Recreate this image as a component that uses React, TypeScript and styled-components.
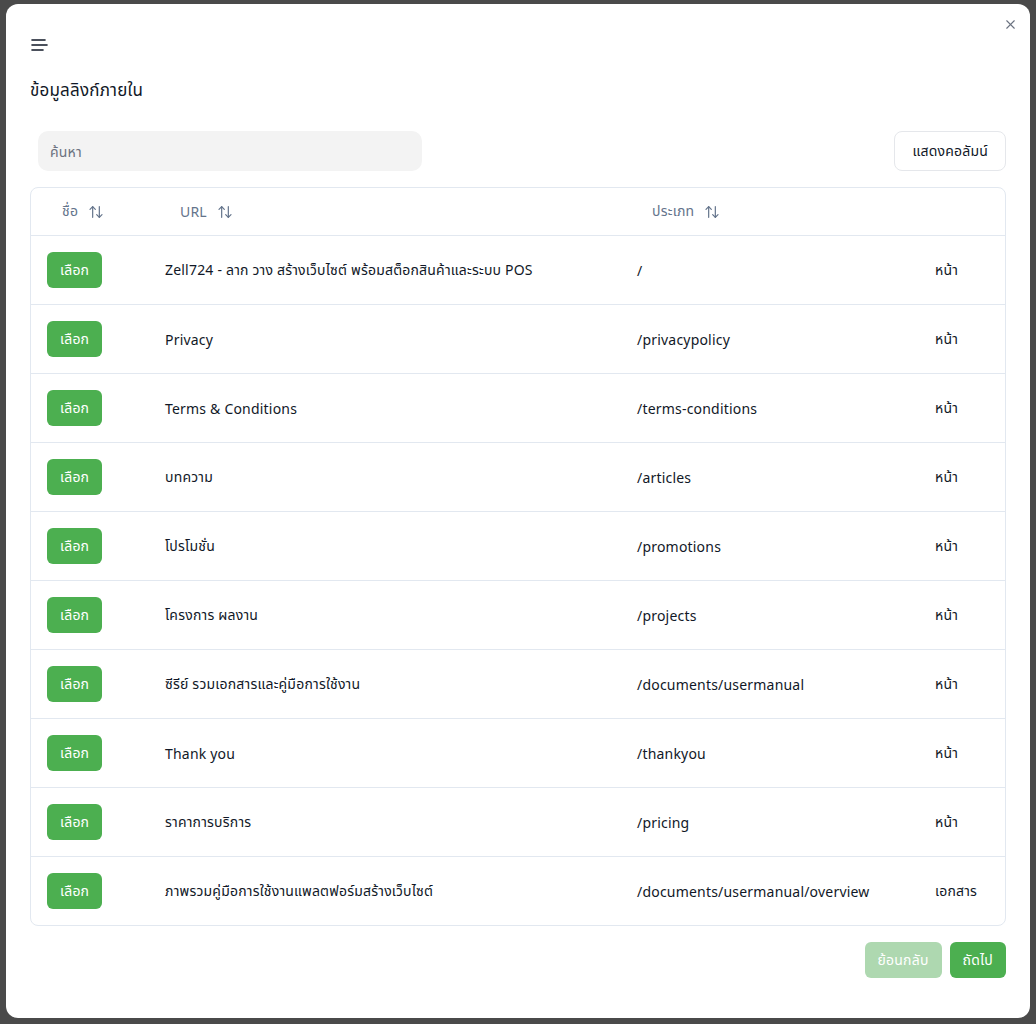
import React from 'react'
import styled, { createGlobalStyle } from 'styled-components'
import { ArrowUpDown, X } from 'lucide-react'

const GlobalStyle = createGlobalStyle`
  * { box-sizing: border-box; }
  html, body {
    margin: 0;
    background: #4a4a4a;
    font-family: "Noto Sans", "Noto Sans Thai", "Open Sans", sans-serif;
    color: #111827;
  }
`

type Link = { name: string; url: string; type: string }

const links: Link[] = [
  { name: 'Zell724 - ลาก วาง สร้างเว็บไซต์ พร้อมสต็อกสินค้าและระบบ POS', url: '/', type: 'หน้า' },
  { name: 'Privacy', url: '/privacypolicy', type: 'หน้า' },
  { name: 'Terms & Conditions', url: '/terms-conditions', type: 'หน้า' },
  { name: 'บทความ', url: '/articles', type: 'หน้า' },
  { name: 'โปรโมชั่น', url: '/promotions', type: 'หน้า' },
  { name: 'โครงการ ผลงาน', url: '/projects', type: 'หน้า' },
  { name: 'ซีรีย์ รวมเอกสารและคู่มือการใช้งาน', url: '/documents/usermanual', type: 'หน้า' },
  { name: 'Thank you', url: '/thankyou', type: 'หน้า' },
  { name: 'ราคาการบริการ', url: '/pricing', type: 'หน้า' },
  { name: 'ภาพรวมคู่มือการใช้งานแพลตฟอร์มสร้างเว็บไซต์', url: '/documents/usermanual/overview', type: 'เอกสาร' },
]

const MenuIcon = () => (
  <svg width="18" height="14" viewBox="0 0 18 14" fill="none" stroke="#111827" strokeWidth="1.6" strokeLinecap="round">
    <path d="M1 2h13" />
    <path d="M1 7h15" />
    <path d="M1 12h11" />
  </svg>
)

const App = () => {
  return (
    <>
      <GlobalStyle />
      <Overlay>
        <Modal>
          <CloseButton aria-label="close">
            <X size={15} strokeWidth={1.8} />
          </CloseButton>
          <MenuButton>
            <MenuIcon />
          </MenuButton>
          <Title>ข้อมูลลิงก์ภายใน</Title>

          <Toolbar>
            <SearchInput placeholder="ค้นหา" />
            <OutlineButton>แสดงคอลัมน์</OutlineButton>
          </Toolbar>

          <Table>
            <HeadRow>
              <HeadCell>
                ชื่อ <ArrowUpDown size={16} strokeWidth={1.8} />
              </HeadCell>
              <HeadCell>
                URL <ArrowUpDown size={16} strokeWidth={1.8} />
              </HeadCell>
              <HeadCell>
                ประเภท <ArrowUpDown size={16} strokeWidth={1.8} />
              </HeadCell>
              <HeadCell />
            </HeadRow>
            {links.map((l) => (
              <Row key={l.url}>
                <Cell>
                  <GreenButton>เลือก</GreenButton>
                </Cell>
                <Cell>{l.name}</Cell>
                <Cell>{l.url}</Cell>
                <Cell>{l.type}</Cell>
              </Row>
            ))}
          </Table>

          <Footer>
            <GreenButton disabled>ย้อนกลับ</GreenButton>
            <GreenButton>ถัดไป</GreenButton>
          </Footer>
        </Modal>
      </Overlay>
    </>
  )
}

export default App

const Overlay = styled.div`
  padding: 4px 6px;
  min-height: 1024px;
`

const Modal = styled.div`
  position: relative;
  width: 1024px;
  height: 1014px;
  background: #ffffff;
  border-radius: 12px;
  padding: 32px 24px 40px;
  display: flex;
  flex-direction: column;
  letter-spacing: 0.2px;
`

const CloseButton = styled.button`
  position: absolute;
  top: 9px;
  right: 9px;
  width: 22px;
  height: 22px;
  display: flex;
  align-items: center;
  justify-content: center;
  border: none;
  background: transparent;
  color: #6b7280;
  padding: 0;
  cursor: pointer;
`

const MenuButton = styled.div`
  width: 20px;
  height: 18px;
  display: flex;
  align-items: center;
  padding-left: 1px;
`

const Title = styled.h2`
  margin: 24px 0 0;
  font-size: 17px;
  font-weight: 400;
  line-height: 24px;
`

const Toolbar = styled.div`
  display: flex;
  justify-content: space-between;
  align-items: center;
  margin-top: 29px;
  padding-left: 8px;
`

const SearchInput = styled.input`
  width: 384px;
  height: 40px;
  border: none;
  outline: none;
  border-radius: 10px;
  background: #f3f3f3;
  padding: 0 12px;
  font-family: inherit;
  font-size: 14px;
  letter-spacing: inherit;
  color: #111827;
  &::placeholder {
    color: #6b7280;
  }
`

const OutlineButton = styled.button`
  height: 40px;
  padding: 0 17px;
  border: 1px solid #e5e7eb;
  border-radius: 8px;
  background: #ffffff;
  font-family: inherit;
  font-size: 14px;
  letter-spacing: inherit;
  color: #111827;
  cursor: pointer;
`

const Table = styled.div`
  margin-top: 16px;
  border: 1px solid #e2e8f0;
  border-radius: 8px;
  overflow: hidden;
`

const HeadRow = styled.div`
  display: grid;
  grid-template-columns: 118px 472px 298px 1fr;
  height: 47px;
  align-items: center;
`

const HeadCell = styled.div`
  display: flex;
  align-items: center;
  gap: 10px;
  padding-left: 31px;
  font-size: 14px;
  color: #64748b;
`

const Row = styled.div`
  display: grid;
  grid-template-columns: 118px 472px 298px 1fr;
  height: 69px;
  align-items: center;
  border-top: 1px solid #e2e8f0;
`

const Cell = styled.div`
  padding-left: 16px;
  font-size: 14px;
  color: #111827;
  white-space: nowrap;
`

const GreenButton = styled.button`
  height: 36px;
  padding: 0 13px;
  border: none;
  border-radius: 6px;
  background: #4caf50;
  color: #ffffff;
  font-family: inherit;
  font-size: 14px;
  letter-spacing: inherit;
  cursor: pointer;
  &:disabled {
    background: #aed8b0;
    cursor: default;
  }
`

const Footer = styled.div`
  display: flex;
  justify-content: flex-end;
  gap: 8px;
  margin-top: 16px;
`
